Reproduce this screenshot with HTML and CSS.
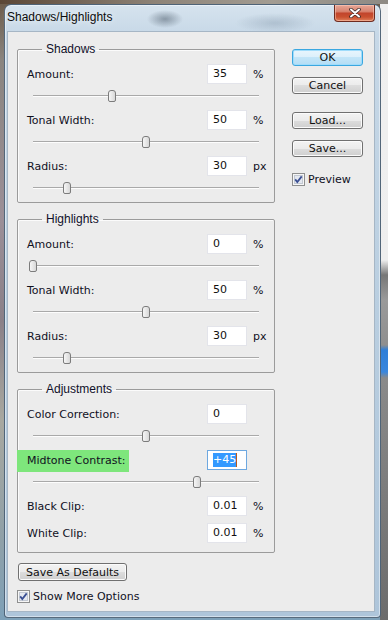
FILE: index.html
```html
<!DOCTYPE html>
<html lang="en">
<head>
  <meta charset="UTF-8">
  <title>Shadows/Highlights</title>
  <link rel="stylesheet" href="styles.css">
</head>
<body>
  <div class="window">
    <div class="titlebar">
      <span class="title">Shadows/Highlights</span>
      <span class="close">
        <svg width="12" height="10" viewBox="0 0 12 10">
          <path d="M2 1.5l8 7M10 1.5l-8 7" stroke="#3a2a28" stroke-width="3.6" stroke-linecap="round"/>
          <path d="M2 1.5l8 7M10 1.5l-8 7" stroke="#fff" stroke-width="2" stroke-linecap="round"/>
        </svg>
      </span>
    </div>

    <div class="client">
      <div class="main">
        <div class="left">
          <!-- Shadows -->
          <fieldset class="group">
            <legend>Shadows</legend>
            <div class="row"><label>Amount:</label><span class="field">35</span><span class="unit">%</span></div>
            <div class="slider"><div class="track"><span class="thumb" style="left: 35%"></span></div></div>
            <div class="row"><label>Tonal Width:</label><span class="field">50</span><span class="unit">%</span></div>
            <div class="slider"><div class="track"><span class="thumb" style="left: 50%"></span></div></div>
            <div class="row"><label>Radius:</label><span class="field">30</span><span class="unit">px</span></div>
            <div class="slider"><div class="track"><span class="thumb" style="left: 15%"></span></div></div>
          </fieldset>

          <!-- Highlights -->
          <fieldset class="group">
            <legend>Highlights</legend>
            <div class="row"><label>Amount:</label><span class="field">0</span><span class="unit">%</span></div>
            <div class="slider"><div class="track"><span class="thumb" style="left: 0%"></span></div></div>
            <div class="row"><label>Tonal Width:</label><span class="field">50</span><span class="unit">%</span></div>
            <div class="slider"><div class="track"><span class="thumb" style="left: 50%"></span></div></div>
            <div class="row"><label>Radius:</label><span class="field">30</span><span class="unit">px</span></div>
            <div class="slider"><div class="track"><span class="thumb" style="left: 15%"></span></div></div>
          </fieldset>

          <!-- Adjustments -->
          <fieldset class="group adjust">
            <legend>Adjustments</legend>
            <div class="row"><label>Color Correction:</label><span class="field">0</span></div>
            <div class="slider"><div class="track"><span class="thumb" style="left: 50%"></span></div></div>
            <div class="row"><label class="hilite">Midtone Contrast:</label><span class="field focus"><span class="sel">+45</span><span class="caret"></span></span></div>
            <div class="slider"><div class="track"><span class="thumb" style="left: 72.5%"></span></div></div>
            <div class="row"><label>Black Clip:</label><span class="field">0.01</span><span class="unit">%</span></div>
            <div class="row clip"><label>White Clip:</label><span class="field">0.01</span><span class="unit">%</span></div>
          </fieldset>
        </div>

        <div class="right">
          <div class="btn default">OK</div>
          <div class="btn cancel">Cancel</div>
          <div class="btn load">Load...</div>
          <div class="btn save">Save...</div>
          <div class="check preview">
            <svg width="13" height="13" viewBox="0 0 13 13"><rect x="0.5" y="0.5" width="12" height="12" fill="#f6f6f6" stroke="#8e8f8f"/><rect x="2.5" y="2.5" width="8" height="8" fill="#e4e8f0" stroke="#c3c9d3"/><path d="M3.2 6.4l2.1 2.6 4.4-5.6" fill="none" stroke="#3a4f93" stroke-width="1.8"/></svg>
            <span>Preview</span>
          </div>
        </div>
      </div>

      <div class="bottom">
        <div class="btn defaults">Save As Defaults</div>
        <div class="check">
          <svg width="13" height="13" viewBox="0 0 13 13"><rect x="0.5" y="0.5" width="12" height="12" fill="#f6f6f6" stroke="#8e8f8f"/><rect x="2.5" y="2.5" width="8" height="8" fill="#e4e8f0" stroke="#c3c9d3"/><path d="M3.2 6.4l2.1 2.6 4.4-5.6" fill="none" stroke="#3a4f93" stroke-width="1.8"/></svg>
          <span>Show More Options</span>
        </div>
      </div>
    </div>
  </div>
</body>
</html>
```

FILE: styles.css
```css
* {
  box-sizing: border-box;
}
html, body {
  margin: 0;
  padding: 0;
}
body {
  width: 388px;
  height: 620px;
  overflow: hidden;
  font-family: "DejaVu Sans", sans-serif;
  font-size: 11px;
  color: #10101e;
  background:
    linear-gradient(to right, #5b4736 0, #8d8377 40%, #a29c92 70%, #8e8a84 100%) top left / 100% 4px no-repeat,
    linear-gradient(to bottom, #f0f0f0 0, #eeeeee 260px, #777 275px, #9a9a9a 300px, #8f8f8f 345px, #2f7fd8 350px, #3a86dc 372px, #8a8a8a 378px, #6c6c6c 620px) right top / 8px 100% no-repeat,
    linear-gradient(to bottom, #6b5a48 0, #8a8580 60px, #9b8f98 220px, #8a8088 320px, #a8a8a0 420px, #8fa0a8 540px, #7da0b8 620px);
}
.window {
  margin: 4px 0 0 4px;
  width: 377px;
  height: 614px;
  border: 1px solid rgba(45, 65, 85, 0.75);
  border-radius: 7px 7px 4px 4px;
  padding: 0 5px 5px 2px;
  display: flex;
  flex-direction: column;
  background:
    radial-gradient(ellipse 18px 9px at 160px 14px, rgba(80, 95, 110, 0.55), transparent),
    radial-gradient(ellipse 40px 10px at 270px 18px, rgba(120, 140, 160, 0.35), transparent),
    linear-gradient(to bottom, #d6e3ee 0, #c7d8e7 30px, #b9cee0 50%, #aec5da 100%);
  box-shadow: inset 0 0 0 1px rgba(255, 255, 255, 0.45);
}
.titlebar {
  height: 26px;
  display: flex;
  align-items: flex-start;
}
.title {
  font-family: "Liberation Sans", sans-serif;
  font-size: 12px;
  line-height: 16px;
  margin-top: 4px;
  color: #0c0c0c;
  text-shadow: 0 0 6px rgba(255, 255, 255, 0.9);
}
.close {
  margin-left: auto;
  width: 41px;
  height: 17px;
  border: 1px solid #6e2b20;
  border-top: none;
  border-radius: 0 0 4px 4px;
  display: flex;
  align-items: center;
  justify-content: center;
  background: linear-gradient(to bottom, #e7a797 0, #d88470 40%, #c2452c 52%, #c9502f 75%, #e0805c 100%);
  box-shadow: inset 0 0 0 1px rgba(255, 210, 190, 0.5);
}
.client {
  flex: 1;
  background: #ececec;
  border: 1px solid #a6b6c5;
  padding: 11px 0 0 9px;
}
.main {
  display: flex;
  gap: 17px;
}
.left {
  width: 258px;
}

/* group boxes */
.group {
  margin: 10px 0 0 0;
  padding: 8px 0 0 9px;
  border: 1px solid #9b9b9b;
  border-radius: 2px;
  box-shadow: inset 1px 1px 0 #fbfbfb;
}
.group:first-child {
  margin-top: 0;
}
.group legend {
  margin-left: 15px;
  padding: 0 4px;
  font-family: "Liberation Sans", sans-serif;
  font-size: 12px;
  line-height: 13px;
  color: #10102a;
}
.adjust {
  padding-bottom: 9px;
}
.row {
  display: flex;
  align-items: center;
  height: 20px;
}
.row label {
  width: 180px;
}
.row.clip {
  margin-top: 7px;
}
.field {
  width: 40px;
  height: 20px;
  background: #fff;
  border: 1px solid #e3e4ea;
  padding-left: 5px;
  line-height: 18px;
  color: #111;
  display: flex;
  align-items: center;
}
.unit {
  margin-left: 6px;
}
.row .hilite {
  align-self: flex-start;
  height: 22px;
  line-height: 22px;
  margin-left: -10px;
  padding-left: 10px;
  width: 190px;
  background: linear-gradient(to right, #7ee67c 0, #7ee67c 112px, transparent 112px);
}
.field.focus {
  border-color: #6ea8e0;
}
.sel {
  background: #3399ff;
  color: #fff;
  line-height: 13px;
  padding: 0 0 1px 0;
}
.caret {
  width: 1px;
  height: 14px;
  background: #b85a1c;
}

/* sliders */
.slider {
  height: 26px;
  padding: 11px 0 0 6px;
}
.track {
  position: relative;
  width: 226px;
  height: 2px;
  border-top: 1px solid #a9a9a9;
  background: #fdfdfd;
}
.thumb {
  position: absolute;
  top: -6px;
  margin-left: -4px;
  width: 8px;
  height: 12px;
  border: 1px solid #7c7c7c;
  border-radius: 3px 3px 2px 2px;
  background: linear-gradient(to right, #f6f6f6, #d8d8d8);
}

/* buttons */
.right {
  width: 71px;
  display: flex;
  flex-direction: column;
}
.btn {
  height: 17px;
  border: 1px solid #707070;
  border-radius: 3px;
  display: flex;
  align-items: center;
  justify-content: center;
  color: #111;
  background: linear-gradient(to bottom, #f3f3f3 0, #ebebeb 50%, #dddddd 50%, #cfcfcf 100%);
  box-shadow: inset 0 0 0 1px #fbfbfb;
}
.btn.default {
  margin-top: 6px;
  border-color: #3aa7e0;
  background: linear-gradient(to bottom, #e8f5fd 0, #dcf0fb 50%, #c3e5f8 50%, #b3ddf5 100%);
  box-shadow: inset 0 0 0 1px #9fdcfb;
}
.btn.cancel {
  margin-top: 11px;
}
.btn.load {
  margin-top: 18px;
}
.btn.save {
  margin-top: 11px;
}
.check {
  display: flex;
  align-items: center;
  gap: 3px;
  height: 15px;
}
.check svg {
  display: block;
}
.check.preview {
  margin-top: 15px;
}
.bottom {
  padding-top: 10px;
}
.btn.defaults {
  width: 109px;
  height: 18px;
  margin-left: 1px;
}
.bottom .check {
  margin-top: 8px;
}
```
